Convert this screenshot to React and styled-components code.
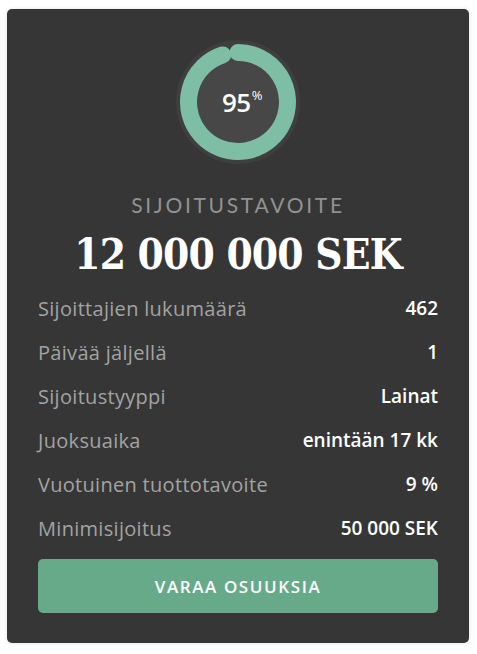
import React from 'react'
import styled, { createGlobalStyle } from 'styled-components'

const GlobalStyle = createGlobalStyle`
  html, body {
    margin: 0;
    padding: 0;
    background: #ffffff;
  }
`

const Page = styled.div`
  padding: 9px 8px 11px 7px;
`

const Card = styled.div`
  width: 462px;
  box-sizing: border-box;
  background: #363636;
  border-radius: 5px;
  box-shadow: 0 0 4px rgba(0, 0, 0, 0.12);
  padding: 31px 31px 30px;
  display: flex;
  flex-direction: column;
  align-items: stretch;
`

const GaugeWrap = styled.div`
  position: relative;
  width: 124px;
  height: 124px;
  align-self: center;
`

const GaugeText = styled.div`
  position: absolute;
  inset: 0;
  display: flex;
  align-items: center;
  justify-content: center;
  padding-left: 8px;
  font-family: 'Open Sans', sans-serif;
  font-weight: 600;
  font-size: 26px;
  color: #ffffff;
  letter-spacing: -0.5px;

  sup {
    font-size: 13px;
    font-weight: 400;
    margin-top: -14px;
    margin-left: 1px;
  }
`

const Title = styled.div`
  margin-top: 29px;
  text-align: center;
  font-family: 'Lato', sans-serif;
  font-size: 21px;
  line-height: 24px;
  letter-spacing: 2.7px;
  color: #929292;
`

const Amount = styled.div`
  margin-top: 14px;
  text-align: center;
  font-family: 'DejaVu Serif Condensed', 'DejaVu Serif', serif;
  font-weight: 700;
  font-size: 42px;
  line-height: 48px;
  letter-spacing: -0.8px;
  color: #ffffff;
`

const Rows = styled.div`
  margin-top: 7px;
  display: flex;
  flex-direction: column;
`

const Row = styled.div`
  height: 44px;
  display: flex;
  align-items: center;
  justify-content: space-between;
`

const Label = styled.span`
  font-family: 'Open Sans', sans-serif;
  font-size: 20px;
  letter-spacing: 0.3px;
  color: #a3a3a3;
`

const Value = styled.span`
  font-family: 'Open Sans', sans-serif;
  font-weight: 600;
  font-size: 19px;
  color: #ffffff;
`

const Button = styled.button`
  margin-top: 9px;
  height: 54px;
  border: none;
  border-radius: 5px;
  background: #66aa8a;
  color: #ffffff;
  font-family: 'Open Sans', sans-serif;
  font-weight: 600;
  font-size: 17px;
  letter-spacing: 1.6px;
  cursor: pointer;
`

const arcPath = (cx, cy, r, percent) => {
  const a = (percent / 100) * 2 * Math.PI
  const x = cx + r * Math.sin(a)
  const y = cy - r * Math.cos(a)
  const large = percent > 50 ? 1 : 0
  return `M ${cx} ${cy - r} A ${r} ${r} 0 ${large} 1 ${x.toFixed(2)} ${y.toFixed(2)}`
}

const Gauge = ({ percent }) => (
  <GaugeWrap>
    <svg width="124" height="124" viewBox="0 0 124 124">
      <circle cx="62" cy="62" r="62" fill="#3f3f3f" />
      <circle cx="62" cy="62" r="49" fill="#474747" />
      <path
        d={arcPath(62, 62, 49.5, percent)}
        fill="none"
        stroke="#7dbea5"
        strokeWidth="17"
        strokeLinecap="round"
      />
    </svg>
    <GaugeText>
      {percent}
      <sup>%</sup>
    </GaugeText>
  </GaugeWrap>
)

const rows = [
  ['Sijoittajien lukumäärä', '462'],
  ['Päivää jäljellä', '1'],
  ['Sijoitustyyppi', 'Lainat'],
  ['Juoksuaika', 'enintään 17 kk'],
  ['Vuotuinen tuottotavoite', '9 %'],
  ['Minimisijoitus', '50 000 SEK'],
]

const App = () => (
  <Page>
    <GlobalStyle />
    <Card>
      <Gauge percent={95} />
      <Title>SIJOITUSTAVOITE</Title>
      <Amount>12 000 000 SEK</Amount>
      <Rows>
        {rows.map(([label, value]) => (
          <Row key={label}>
            <Label>{label}</Label>
            <Value>{value}</Value>
          </Row>
        ))}
      </Rows>
      <Button>VARAA OSUUKSIA</Button>
    </Card>
  </Page>
)

export default App
